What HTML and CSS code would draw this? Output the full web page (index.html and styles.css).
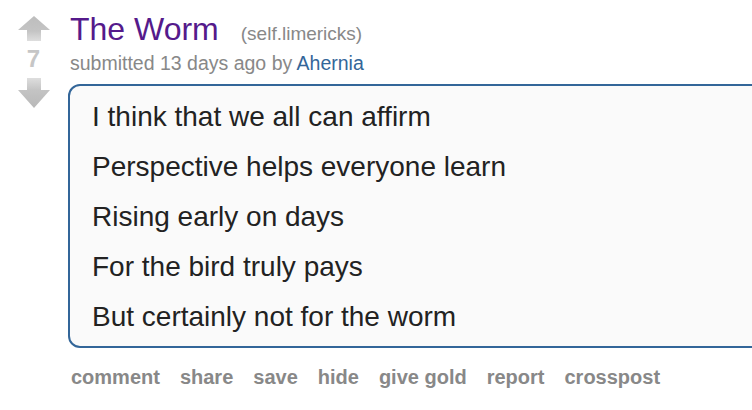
FILE: index.html
```html
<!DOCTYPE html>
<html>
<head>
<meta charset="utf-8">
<link rel="stylesheet" href="styles.css">
</head>
<body>
<div class="thing">
  <div class="midcol">
    <svg class="arrow up" width="32" height="26" viewBox="0 0 32 26">
      <defs>
        <linearGradient id="gu" x1="0" y1="0" x2="0" y2="1">
          <stop offset="0" stop-color="#bdbdbd"/>
          <stop offset="0.6" stop-color="#c4c4c4"/>
          <stop offset="1" stop-color="#dedede"/>
        </linearGradient>
      </defs>
      <polygon points="16,0 32,14 23,14 23,25 9,25 9,14 0,14" fill="url(#gu)"/>
    </svg>
    <div class="score">7</div>
    <svg class="arrow down" width="32" height="30" viewBox="0 0 32 30">
      <defs>
        <linearGradient id="gd" x1="0" y1="0" x2="0" y2="1">
          <stop offset="0" stop-color="#dedede"/>
          <stop offset="0.4" stop-color="#c4c4c4"/>
          <stop offset="1" stop-color="#b8b8b8"/>
        </linearGradient>
      </defs>
      <polygon points="9,0 23,0 23,12 32,12 16,30 0,12 9,12" fill="url(#gd)"/>
    </svg>
  </div>
  <div class="entry">
    <p class="title"><a class="title-link" href="#">The Worm</a><span class="domain">(self.limericks)</span></p>
    <p class="tagline">submitted 13 days ago by <a class="author" href="#">Ahernia</a></p>
    <div class="usertext">
      <p>I think that we all can affirm</p>
      <p>Perspective helps everyone learn</p>
      <p>Rising early on days</p>
      <p>For the bird truly pays</p>
      <p>But certainly not for the worm</p>
    </div>
    <ul class="buttons">
      <li>comment</li>
      <li>share</li>
      <li>save</li>
      <li>hide</li>
      <li>give gold</li>
      <li>report</li>
      <li>crosspost</li>
    </ul>
  </div>
</div>
</body>
</html>
```

FILE: styles.css
```css
html, body {
  margin: 0;
  padding: 0;
  background: #ffffff;
  overflow: hidden;
  width: 752px;
  height: 410px;
}
body {
  font-family: "Liberation Sans", Arial, Helvetica, sans-serif;
}
.thing {
  display: flex;
  align-items: flex-start;
  width: 752px;
  overflow: hidden;
}
.midcol {
  width: 66px;
  flex: none;
  display: flex;
  flex-direction: column;
  align-items: center;
  padding-top: 16px;
}
.arrow {
  display: block;
}
.arrow.up {
  margin-left: 1px;
}
.arrow.down {
  margin-left: 1px;
  margin-top: 5px;
}
.score {
  font-size: 24px;
  line-height: 24px;
  font-weight: bold;
  color: #c6c6c6;
  margin-top: 5px;
  margin-left: 1px;
  height: 26px;
}
.entry {
  flex: none;
  width: 760px;
  margin-left: 2px;
}
.title {
  margin: 0;
  padding-top: 11px;
  font-size: 32px;
  line-height: 36px;
  white-space: nowrap;
}
.title-link {
  color: #551a8b;
  text-decoration: none;
  margin-left: 2px;
}
.domain {
  font-size: 19px;
  color: #888888;
  margin-left: 22px;
}
.tagline {
  margin: -2px 0 0 2px;
  font-size: 19.5px;
  line-height: 26px;
  color: #888888;
  white-space: nowrap;
}
.author {
  color: #336699;
  text-decoration: none;
}
.usertext {
  margin-top: 8px;
  width: 760px;
  border: 2px solid #336699;
  border-radius: 12px;
  background: #fafafa;
  padding: 11px 22px 9px;
  display: flex;
  flex-direction: column;
  gap: 10px;
}
.usertext p {
  margin: 0;
  font-size: 28px;
  line-height: 40px;
  color: #222222;
  white-space: nowrap;
}
.buttons {
  list-style: none;
  margin: 17px 0 0 0;
  padding: 0 0 0 3px;
  display: flex;
  gap: 20px;
  font-size: 20px;
  line-height: 24px;
  font-weight: bold;
  color: #888888;
  white-space: nowrap;
}
```
